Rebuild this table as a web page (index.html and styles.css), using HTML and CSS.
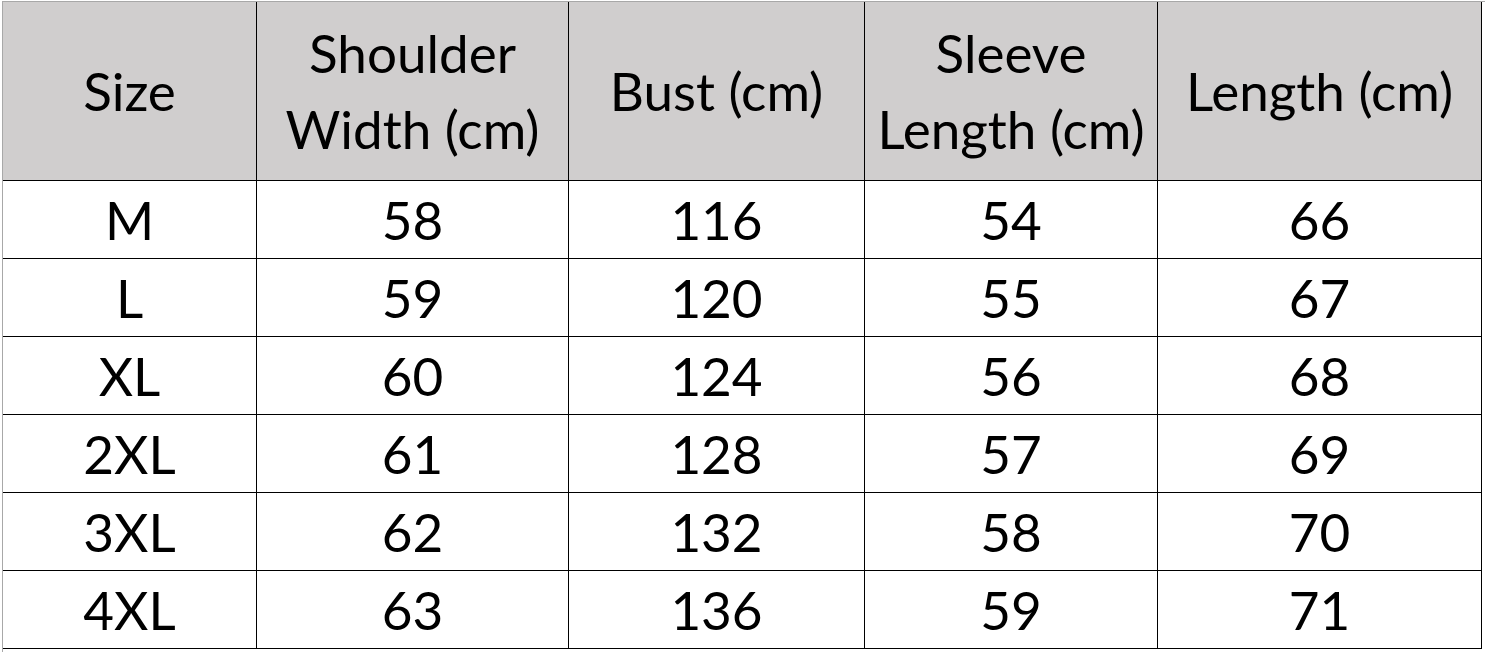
FILE: index.html
```html
<!DOCTYPE html>
<html>
<head>
<meta charset="utf-8">
<link rel="stylesheet" href="styles.css">
</head>
<body>
<div class="sheet">
  <div class="grid">
    <div class="cell head">Size</div>
    <div class="cell head">Shoulder<br>Width (cm)</div>
    <div class="cell head">Bust (cm)</div>
    <div class="cell head">Sleeve<br>Length (cm)</div>
    <div class="cell head">Length (cm)</div>

    <div class="cell">M</div><div class="cell">58</div><div class="cell">116</div><div class="cell">54</div><div class="cell">66</div>
    <div class="cell">L</div><div class="cell">59</div><div class="cell">120</div><div class="cell">55</div><div class="cell">67</div>
    <div class="cell">XL</div><div class="cell">60</div><div class="cell">124</div><div class="cell">56</div><div class="cell">68</div>
    <div class="cell">2XL</div><div class="cell">61</div><div class="cell">128</div><div class="cell">57</div><div class="cell">69</div>
    <div class="cell">3XL</div><div class="cell">62</div><div class="cell">132</div><div class="cell">58</div><div class="cell">70</div>
    <div class="cell">4XL</div><div class="cell">63</div><div class="cell">136</div><div class="cell">59</div><div class="cell">71</div>
  </div>
</div>
</body>
</html>
```
FILE: styles.css
```css
html, body {
  margin: 0;
  padding: 0;
  background: #ffffff;
}
.sheet {
  margin-top: 1px;
  margin-left: 2px;
  border-top: 1px solid #a8a8a8;
  border-left: 1px solid #a8a8a8;
  width: 1483px;
  height: 651px;
  box-sizing: border-box;
}
.grid {
  display: grid;
  grid-template-columns: 254px 312px 296px 293px 324px;
  grid-template-rows: 179px repeat(6, 78px);
  font-family: Lato, "Open Sans", sans-serif;
  font-size: 53px;
  line-height: 76px;
  color: #000;
}
.cell {
  box-sizing: border-box;
  border-right: 1px solid #000;
  border-bottom: 1px solid #000;
  display: flex;
  align-items: center;
  justify-content: center;
  text-align: center;
  background: #fff;
}
.head {
  background: #d0cece;
}
```
